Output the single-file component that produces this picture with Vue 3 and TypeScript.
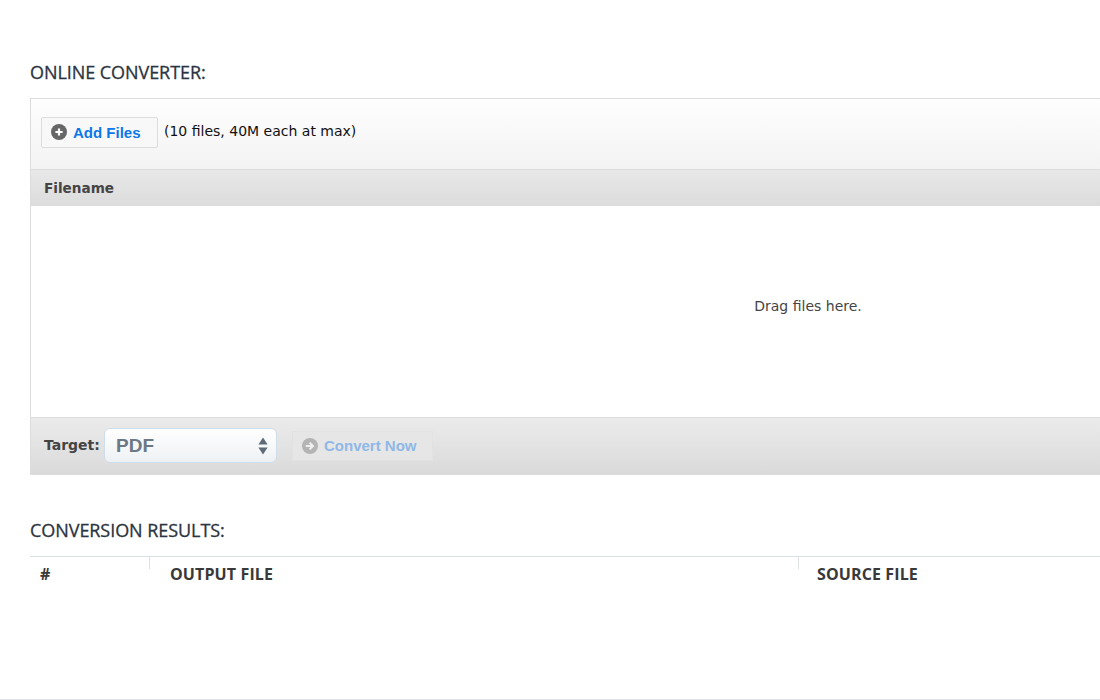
<script setup lang="ts">
const columns: { label: string; cls: string }[] = [
  { label: '#', cls: 'col-num' },
  { label: 'OUTPUT FILE', cls: 'col-output' },
  { label: 'SOURCE FILE', cls: 'col-source' },
]
</script>

<template>
  <div class="page">
    <section class="block converter-block">
      <h2 class="title">ONLINE CONVERTER:</h2>
      <div class="panel">
        <div class="toolbar">
          <button class="btn add">
            <svg class="ico" viewBox="0 0 16 16" width="16" height="16">
              <circle cx="8" cy="8" r="8" fill="#666" />
              <path d="M8 4.4v7.2M4.4 8h7.2" stroke="#fff" stroke-width="2.2" />
            </svg>
            <span>Add Files</span>
          </button>
          <span class="limit">(10 files, 40M each at max)</span>
        </div>
        <div class="file-head">Filename</div>
        <div class="drop"><span>Drag files here.</span></div>
        <div class="foot">
          <span class="target">Target:</span>
          <div class="select">
            <span>PDF</span>
            <svg viewBox="0 0 10 18" width="10" height="18">
              <path d="M5 0.5 L9.6 7.5 H0.4Z" fill="#5f6b78" />
              <path d="M5 17.5 L9.6 10.5 H0.4Z" fill="#5f6b78" />
            </svg>
          </div>
          <button class="btn convert">
            <svg class="ico" viewBox="0 0 16 16" width="16" height="16">
              <circle cx="8" cy="8" r="8" fill="#b4b4b4" />
              <path d="M3.8 8h6.6M7.6 4.6 11 8l-3.4 3.4" stroke="#f0f0f0" stroke-width="2" fill="none" />
            </svg>
            <span>Convert Now</span>
          </button>
        </div>
      </div>
    </section>

    <section class="block results-block">
      <h2 class="title">CONVERSION RESULTS:</h2>
      <div class="results-head">
        <div v-for="c in columns" :key="c.label" class="col" :class="c.cls">{{ c.label }}</div>
      </div>
    </section>
  </div>
</template>

<style>
html, body { margin: 0; padding: 0; background: #fff; overflow: hidden; }
</style>

<style scoped>
.page {
  width: 1100px;
  height: 700px;
  box-sizing: border-box;
  overflow: hidden;
  padding: 61px 0 0 30px;
  border-bottom: 1px solid #dde2e8;
  background: #fff;
}
.block { width: 1555px; }
.title {
  margin: 0;
  font: 400 18px/22px "Open Sans", sans-serif;
  letter-spacing: -0.06px;
  -webkit-text-stroke: 0.3px #2b3440;
  color: #2b3440;
}
.panel {
  margin-top: 15px;
  background: #fff;
  box-sizing: border-box;
  border-left: 1px solid #dcdcdc;
  border-top: 1px solid #dcdcdc;
}
.toolbar {
  height: 71px;
  box-sizing: border-box;
  display: flex;
  align-items: center;
  gap: 6px;
  padding: 0 0 4px 10px;
  background: linear-gradient(#fefefe, #f3f3f3);
  border-bottom: 1px solid #dcdcdc;
}
.btn {
  display: flex;
  align-items: center;
  gap: 6px;
  margin: 0;
  box-sizing: border-box;
  font: bold 15px "Liberation Sans", sans-serif;
}
.add {
  width: 117px;
  height: 31px;
  padding: 0 0 0 9px;
  background: #f8f8f8;
  border: 1px solid #dcdcdc;
  border-radius: 2px;
  color: #0a78ea;
}
.limit {
  font: 14px "DejaVu Sans", sans-serif;
  color: #111;
  position: relative;
  top: -1px;
}
.file-head {
  height: 36px;
  box-sizing: border-box;
  padding: 0 0 0 13px;
  display: flex;
  align-items: center;
  background: linear-gradient(#e8e8e8, #dcdcdc);
  font: bold 13.6px "DejaVu Sans", sans-serif;
  color: #444;
}
.drop {
  height: 211px;
  box-sizing: border-box;
  padding-bottom: 12px;
  display: flex;
  align-items: center;
  justify-content: center;
  font: 14px "DejaVu Sans", sans-serif;
  color: #444;
}
.foot {
  height: 58px;
  box-sizing: border-box;
  display: flex;
  align-items: center;
  padding: 0 0 2px 13px;
  border-top: 1px solid #dcdcdc;
  background: linear-gradient(#ebebeb, #dadada);
}
.target {
  font: bold 14px "DejaVu Sans", sans-serif;
  color: #444;
  width: 60px;
  position: relative;
  top: -1px;
}
.select {
  width: 173px;
  height: 35px;
  box-sizing: border-box;
  padding: 0 8px 0 11px;
  display: flex;
  align-items: center;
  justify-content: space-between;
  background: linear-gradient(#ffffff, #eef1f4);
  border: 1px solid #cfdeeb;
  border-radius: 6px;
  font: bold 19px "Liberation Sans", sans-serif;
  color: #6d7885;
}
.convert {
  width: 141px;
  height: 30px;
  margin-left: 15px;
  padding: 0 0 0 9px;
  background: #e6e6e6;
  border: 1px solid #e2e2e2;
  color: #8fb8e6;
}
.ico { flex: none; }
.results-block { margin-top: 44px; }
.results-head {
  margin-top: 15px;
  height: 36px;
  display: flex;
  border-top: 1px solid #dde0e3;
}
.col {
  font: 700 16px/34px "Open Sans", sans-serif;
  letter-spacing: 0.12px;
  color: #393939;
  box-sizing: border-box;
  position: relative;
}
.col-num { width: 120px; padding-left: 10px; }
.col-output { width: 649px; padding-left: 20px; }
.col-source { padding-left: 18px; flex: 1; }
.col-output::before, .col-source::before {
  content: "";
  position: absolute;
  left: -1px;
  top: 0;
  height: 12px;
  width: 1px;
  background: #dde0e5;
}
</style>
